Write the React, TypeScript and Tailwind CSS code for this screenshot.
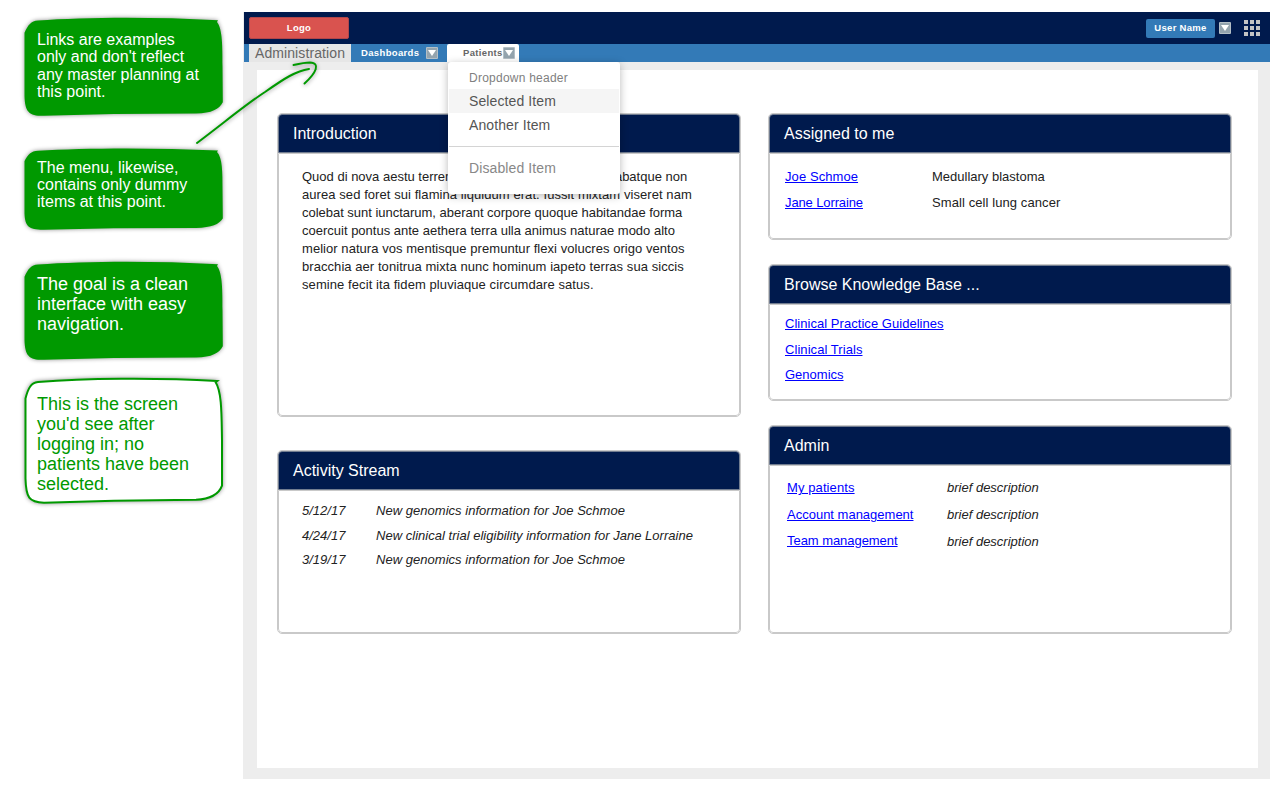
import type { ReactNode } from "react";

const NOTE_PATH =
  "M0.5 16 C4 8 7 4 14 3.5 C60 0 130 -0.5 194 3.2 L193 5 C198.500 12 198.500 30 198.500 50 L198.800 86 C195 93 188 97 172 97.5 L90 98 L20 99.8 C5 100 1 96 0.5 80 Z";

const OUTLINE_PATH =
  "M1.5 17 C4 9 7 4.5 14 4 C60 1 130 0.2 193 3.2 L191.500 4 C198 12 197.500 30 198 50 L198 85.500 C195 92 188 96 172 96.7 L90 97.500 L20 99 C5 98.500 2 95 1.5 80 Z";

function Note({ size, text, outline = false, children }: { size: string; text: string; outline?: boolean; children: ReactNode }) {
  return (
    <div className={`grid w-[200px] grid-rows-[minmax(0,1fr)] ${size}`}>
      <svg
        viewBox="0 0 200 100"
        preserveAspectRatio="none"
        className="[grid-area:1/1] h-full w-full overflow-visible drop-shadow-[0_0_2px_rgba(0,0,0,0.45)]"
      >
        <path
          d={outline ? OUTLINE_PATH : NOTE_PATH}
          fill={outline ? "#ffffff" : "#009900"}
          stroke={outline ? "#009900" : "none"}
          strokeWidth="2"
          vectorEffect="non-scaling-stroke"
        />
      </svg>
      <p className={`[grid-area:1/1] relative whitespace-pre pl-[13px] ${text}`}>{children}</p>
    </div>
  );
}

function Caret() {
  return (
    <svg width="12" height="12" viewBox="0 0 12 12" className="shrink-0">
      <rect width="12" height="12" rx="1" fill="#b4bfc6" />
      <rect x="1" y="1" width="10" height="10" fill="#94a4ae" />
      <path d="M2 3 H10 L6 9 Z" fill="#fff" />
    </svg>
  );
}

function Panel({ title, size, children }: { title: string; size: string; children: ReactNode }) {
  return (
    <section className={`flex w-[464px] flex-col overflow-hidden rounded-[5px] border border-[#c9c9c9] bg-white ${size}`}>
      <h2 className="flex h-[39px] shrink-0 items-center rounded-t-[4px] border border-[#727d90] bg-[#001a4d] pl-[14px] pt-px text-[16px] text-white">
        {title}
      </h2>
      <div className="grow rounded-b-[4px] border border-[#c9c9c9]">{children}</div>
    </section>
  );
}

function Link({ className = "", children }: { className?: string; children: ReactNode }) {
  return (
    <a href="#" className={`text-[#0000ff] underline ${className}`}>
      {children}
    </a>
  );
}

export default function App() {
  return (
    <div className="relative flex h-[800px] w-[1280px] overflow-hidden bg-white font-['Liberation_Sans',Arial,sans-serif] text-[13px] text-[#222]">
      <aside className="flex w-[243px] shrink-0 flex-col pl-6 pt-[17px] text-white">
        <Note size="h-[99px]" text="pt-[14px] text-[16px] leading-[17.4px]">
          {"Links are examples\nonly and don't reflect\nany master planning at\nthis point."}
        </Note>
        <Note size="mt-8 h-[82px]" text="pt-[11px] text-[16px] leading-[17.2px]">
          {"The menu, likewise,\ncontains only dummy\nitems at this point."}
        </Note>
        <Note size="mt-[31px] h-[99px]" text="pt-[13px] text-[18px] leading-[20px]">
          {"The goal is a clean\ninterface with easy\nnavigation."}
        </Note>
        <Note size="mt-[17px] h-[127px]" outline text="pt-[17px] text-[18px] leading-[20px] text-[#009900]">
          {"This is the screen\nyou'd see after\nlogging in; no\npatients have been\nselected."}
        </Note>
      </aside>

      <div className="mt-3 flex h-[767px] w-[1027px] shrink-0 flex-col bg-[#ededed]">
        <header className="ml-px flex h-8 shrink-0 items-center bg-[#001a4d] pl-[5px] pr-[10px] text-[9.5px] font-bold tracking-[0.3px] text-white">
          <div className="flex h-[22px] w-[100px] items-center justify-center rounded-[2px] border border-[#b0474b] bg-[#d9534f]">Logo</div>
          <button className="ml-auto flex h-[19px] w-[69px] items-center justify-center rounded-[2px] bg-[#337ab7]">User Name</button>
          <div className="ml-1 mr-[13px] flex">
            <Caret />
          </div>
          <svg width="16" height="16" viewBox="0 0 16 16" fill="#c4c4c4">
            <path d="M0 0h4v4H0zM6 0h4v4H6zM12 0h4v4h-4zM0 6h4v4H0zM6 6h4v4H6zM12 6h4v4h-4zM0 12h4v4H0zM6 12h4v4H6zM12 12h4v4h-4z" />
          </svg>
        </header>

        <nav className="ml-px flex h-[18px] shrink-0 items-center bg-[#337ab7] pl-[5px] text-[9.5px] font-bold tracking-[0.35px] text-white">
          <div className="flex h-[18px] w-[102px] items-center justify-center bg-[#e6e6e6] text-[14px] font-normal tracking-[0.1px] text-[#666]">
            Administration
          </div>
          <div className="ml-[10px] flex items-center gap-[6px]">
            <span className="w-[59px] whitespace-nowrap">Dashboards</span>
            <Caret />
          </div>
          <div className="relative ml-[9px] flex h-[18px] w-[72px] items-center rounded-t-[2px] bg-white pl-4 text-[#666]">
            <span className="w-[40px] whitespace-nowrap">Patients</span>
            <Caret />
            <div className="absolute left-px top-[18px] z-10 h-[132px] w-[172px] rounded-[3px] bg-white px-px pt-2 text-[14px] font-normal tracking-[0.1px] text-[#555] shadow-[0_2px_9px_rgba(0,0,0,0.28)]">
              <div className="h-[19px] pl-5 text-[12px] leading-[16px] tracking-[0.24px] text-[#808080]">Dropdown header</div>
              <div className="h-6 bg-[#f5f5f5] pl-5 leading-6">Selected Item</div>
              <div className="h-6 pl-5 leading-6">Another Item</div>
              <div className="mt-[9px] h-px bg-[#d4d4d4]" />
              <div className="mt-[9px] h-6 pl-5 leading-6 text-[#888]">Disabled Item</div>
            </div>
          </div>
        </nav>

        <main className="ml-[14px] mt-2 flex h-[698px] w-[1001px] gap-[27px] bg-white pl-[20px] pt-[43px]">
          <div className="flex flex-col gap-[33px]">
            <Panel title="Introduction" size="h-[304px]">
              <p className="flex flex-col whitespace-pre pl-[23px] pt-[14px] leading-[18px]">
                <span>Quod di nova aestu terrenae mollia frigida montes ut habatque non</span>
                <span className="tracking-[0.07px]">aurea sed foret sui flamina liquidum erat. Iussit mixtam viseret nam</span>
                <span className="tracking-[-0.02px]">colebat sunt iunctarum, aberant corpore quoque habitandae forma</span>
                <span>coercuit pontus ante aethera terra ulla animus naturae modo alto</span>
                <span className="tracking-[0.05px]">melior natura vos mentisque premuntur flexi volucres origo ventos</span>
                <span className="tracking-[0.06px]">bracchia aer tonitrua mixta nunc hominum iapeto terras sua siccis</span>
                <span className="tracking-[0.08px]">semine fecit ita fidem pluviaque circumdare satus.</span>
              </p>
            </Panel>
            <Panel title="Activity Stream" size="h-[184px]">
              <div className="grid grid-cols-[74px_auto] justify-start pl-[23px] pt-[8px] italic leading-[24.5px]">
                <span>5/12/17</span>
                <span className="tracking-[0.03px]">New genomics information for Joe Schmoe</span>
                <span>4/24/17</span>
                <span className="tracking-[0.02px]">New clinical trial eligibility information for Jane Lorraine</span>
                <span>3/19/17</span>
                <span className="tracking-[0.03px]">New genomics information for Joe Schmoe</span>
              </div>
            </Panel>
          </div>
          <div className="flex flex-col gap-[24px]">
            <Panel title="Assigned to me" size="h-[127px]">
              <div className="grid grid-cols-[147px_auto] justify-items-start justify-start pl-[15px] pt-[10px] leading-[26px]">
                <Link className="tracking-[0.08px]">Joe Schmoe</Link>
                <span>Medullary blastoma</span>
                <Link className="tracking-[-0.12px]">Jane Lorraine</Link>
                <span className="tracking-[0.09px]">Small cell lung cancer</span>
              </div>
            </Panel>
            <Panel title="Browse Knowledge Base ..." size="h-[137px]">
              <div className="flex flex-col items-start pl-[15px] pt-[6px] leading-[25.6px]">
                <Link className="tracking-[0.04px]">Clinical Practice Guidelines</Link>
                <Link className="tracking-[0.06px]">Clinical Trials</Link>
                <Link>Genomics</Link>
              </div>
            </Panel>
            <Panel title="Admin" size="h-[209px]">
              <div className="grid grid-cols-[160px_auto] justify-items-start justify-start pl-[17px] pt-[8px] leading-[27px]">
                <Link className="tracking-[0.1px]">My patients</Link>
                <i>brief description</i>
                <Link>Account management</Link>
                <i>brief description</i>
                <Link className="-mt-px tracking-[-0.05px]">Team management</Link>
                <i>brief description</i>
              </div>
            </Panel>
          </div>
        </main>
      </div>

      <svg
        width="140"
        height="100"
        viewBox="190 54 140 100"
        className="absolute left-[190px] top-[54px] drop-shadow-[0_1px_2px_rgba(0,0,0,0.4)]"
        fill="none"
        stroke="#009900"
        strokeWidth="2"
        strokeLinecap="round"
      >
        <path d="M197 143 C225 122 245 105 265 92 C285 78 296 71 309 69" />
        <path d="M293.500 65 C300 63.500 306 62.500 310 62.500 C321 63 316 73 304.500 83.500" />
      </svg>
    </div>
  );
}
